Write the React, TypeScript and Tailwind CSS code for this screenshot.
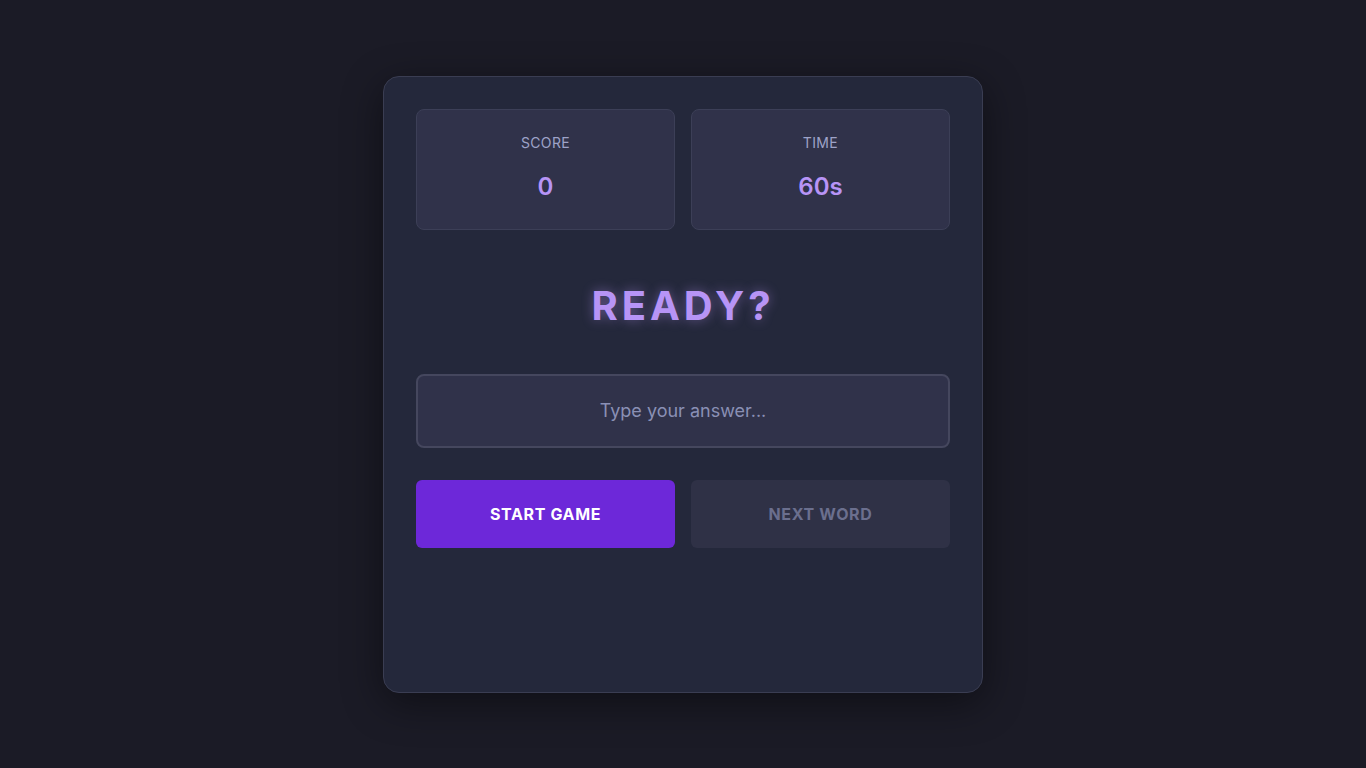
import React, { useState } from "react";

const StatBox = ({ label, value }: { label: string; value: string }) => (
  <div className="flex flex-col items-center rounded-lg border border-[#3c3f57] bg-[#30324a] pt-[23px] pb-[21px]">
    <div className="text-sm leading-5 tracking-wide text-[#9ea3c8]">{label}</div>
    <div className="mt-[13px] text-2xl leading-[42px] font-semibold text-[#b794f6]">{value}</div>
  </div>
);

export default function App() {
  const [answer, setAnswer] = useState("");

  return (
    <div
      className="flex min-h-screen items-center justify-center bg-[#1b1b26]"
      style={{ fontFamily: "Inter, 'Noto Sans', sans-serif" }}
    >
      <div className="w-[600px] rounded-2xl border border-[#3a3d52] bg-[#24283b] p-8 shadow-[0_10px_40px_rgba(0,0,0,0.45)]">
        <div className="grid grid-cols-2 gap-4">
          <StatBox label="SCORE" value="0" />
          <StatBox label="TIME" value="60s" />
        </div>

        <div className="mt-[52px] mb-[44px] text-center text-[40px] leading-[48px] font-bold tracking-[0.1em] text-[#b794f6] [text-shadow:0_0_12px_rgba(183,148,246,0.45)]">
          READY?
        </div>

        <input
          value={answer}
          onChange={(e) => setAnswer(e.target.value)}
          placeholder="Type your answer..."
          className="h-[74px] w-full rounded-lg border-2 border-[#45475e] bg-[#30324a] text-center text-lg text-[#cdd6f4] outline-none placeholder:text-[#8a90b5]"
        />

        <div className="mt-8 grid grid-cols-2 gap-4">
          <button className="h-[68px] rounded-md bg-[#6d28d9] text-base font-bold tracking-[0.04em] text-white">
            START GAME
          </button>
          <button
            disabled
            className="h-[68px] rounded-md bg-[#2f3146] text-base font-bold tracking-[0.04em] text-[#6b6f8e]"
          >
            NEXT WORD
          </button>
        </div>

        <div className="mt-8 h-[80px]" />
      </div>
    </div>
  );
}
